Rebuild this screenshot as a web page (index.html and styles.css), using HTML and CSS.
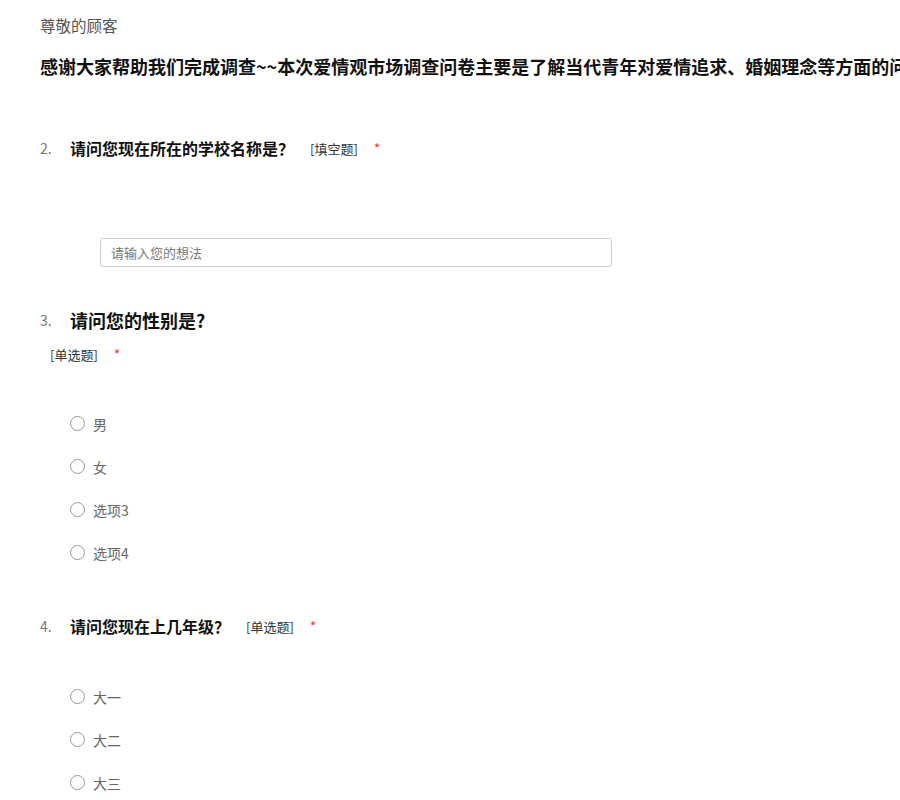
FILE: index.html
```html
<!DOCTYPE html>
<html lang="zh-CN">
<head>
<meta charset="UTF-8">
<title>爱情观市场调查问卷</title>
<link rel="stylesheet" href="styles.css">
</head>
<body>
<div class="survey">
  <div class="greet">尊敬的顾客</div>
  <div class="intro">感谢大家帮助我们完成调查~~本次爱情观市场调查问卷主要是了解当代青年对爱情追求、婚姻理念等方面的问题，请您如实填写。</div>

  <div class="question q-fill">
    <div class="q-head">
      <span class="q-num">2.</span>
      <span class="q-title">请问您现在所在的学校名称是？</span>
      <span class="q-type">[填空题]</span>
      <span class="req">*</span>
    </div>
    <input class="answer" type="text" placeholder="请输入您的想法">
  </div>

  <div class="question q-gender">
    <div class="q-head">
      <span class="q-num">3.</span>
      <span class="q-title big">请问您的性别是?</span>
    </div>
    <div class="q-typeline">
      <span class="q-type">[单选题]</span>
      <span class="req">*</span>
    </div>
    <div class="options">
      <label class="opt"><span class="radio"></span>男</label>
      <label class="opt"><span class="radio"></span>女</label>
      <label class="opt"><span class="radio"></span>选项3</label>
      <label class="opt"><span class="radio"></span>选项4</label>
    </div>
  </div>

  <div class="question q-grade">
    <div class="q-head">
      <span class="q-num">4.</span>
      <span class="q-title">请问您现在上几年级？</span>
      <span class="q-type">[单选题]</span>
      <span class="req">*</span>
    </div>
    <div class="options">
      <label class="opt"><span class="radio"></span>大一</label>
      <label class="opt"><span class="radio"></span>大二</label>
      <label class="opt"><span class="radio"></span>大三</label>
    </div>
  </div>
</div>
</body>
</html>
```

FILE: styles.css
```css
html, body {
	overflow: hidden;
}

body {
	margin: 0;
	background-color: #fff;
	font-family: "Noto Sans CJK SC", "Noto Sans", sans-serif;
	color: #333;
}

.survey {
	padding: 14px 0 0 40px;
}

.greet {
	font-size: 15.5px;
	line-height: 22px;
	color: #555;
}

.intro {
	margin-top: 18px;
	font-size: 18px;
	line-height: 24px;
	font-weight: bold;
	color: #111;
	white-space: nowrap;
}

.question {
	margin-top: 58px;
}

.q-gender {
	margin-top: 40px;
}

.q-grade {
	margin-top: 40px;
}

.q-head {
	display: flex;
	align-items: center;
	height: 24px;
	white-space: nowrap;
}

.q-gender .q-head {
	height: 26px;
}

.q-num {
	width: 30px;
	font-size: 14px;
	color: #777;
}

.q-title {
	font-size: 16px;
	font-weight: bold;
	color: #111;
}

.q-title.big {
	font-size: 18px;
}

.q-type {
	margin-left: 16px;
	font-size: 13px;
	color: #333;
}

.req {
	margin-left: 16px;
	font-size: 14px;
	color: #f33;
}

.q-typeline {
	display: flex;
	align-items: center;
	height: 20px;
	margin: 11px 0 0 10px;
}

.q-typeline .q-type {
	margin-left: 0;
}

.answer {
	display: block;
	box-sizing: border-box;
	width: 512px;
	height: 29px;
	margin: 78px 0 0 60px;
	padding: 0 10px;
	border: 1px solid #ccc;
	border-radius: 3px;
	font-family: inherit;
	font-size: 13px;
	color: #333;
	outline: none;
}

.answer::placeholder {
	color: #777;
}

.options {
	margin-top: 38px;
	padding-left: 30px;
}

.q-grade .options {
	margin-top: 37px;
}

.opt {
	display: flex;
	align-items: center;
	height: 43px;
	font-size: 14px;
	color: #666;
}

.radio {
	box-sizing: border-box;
	width: 15px;
	height: 15px;
	margin-right: 8px;
	border: 1px solid #999;
	border-radius: 50%;
	background: #fff;
}
```
